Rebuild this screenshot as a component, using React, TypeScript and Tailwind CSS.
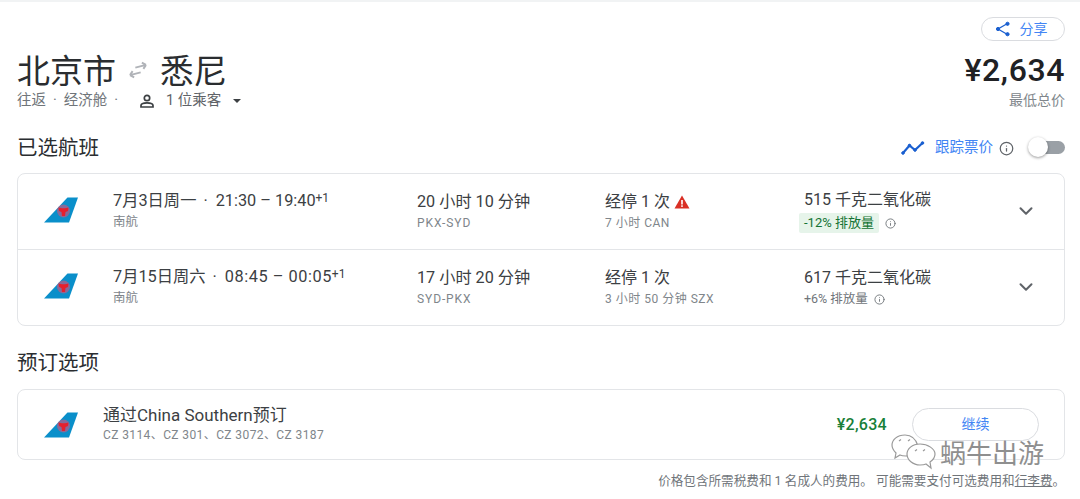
import { ChevronDown, Info } from "lucide-react";

const FONT = "font-['Roboto','Noto_Sans_CJK_SC',sans-serif]";

const FLIGHTS = [
  {
    date: "7月3日周一",
    times: "21:30 – 19:40",
    timesClass: "",
    duration: "20 小时 10 分钟",
    route: "PKX-SYD",
    stopInfo: "7 小时 CAN",
    warn: true,
    co2: "515 千克二氧化碳",
    emissions: "-12% 排放量",
    lower: true,
  },
  {
    date: "7月15日周六",
    times: "08:45 – 00:05",
    timesClass: "tracking-[0.55px]",
    duration: "17 小时 20 分钟",
    route: "SYD-PKX",
    stopInfo: "3 小时 50 分钟 SZX",
    warn: false,
    co2: "617 千克二氧化碳",
    emissions: "+6% 排放量",
    lower: false,
  },
];

function TailLogo() {
  return (
    <svg width="35" height="26" viewBox="0 0 35 26" className="shrink-0">
      <polygon points="0,25.5 23.5,0.5 34,0.5 25,25.5" fill="#0a8fca" />
      <circle cx="19.5" cy="14" r="6.5" fill="#c9567f" opacity="0.65" />
      <path
        d="M14.5 10.5 C16.5 11.5 22.5 11.5 24.5 10.5 L24 14 L21.5 15 L21 19 L18 19 L17.5 15 L15 14 Z"
        fill="#e5202e"
      />
    </svg>
  );
}

function FlightRow({ flight }: { flight: (typeof FLIGHTS)[number] }) {
  return (
    <div className="grid h-[75px] grid-cols-[95px_304px_188px_199px_200px_1fr] items-center">
      <div className="-mt-[3px] pl-[26px]">
        <TailLogo />
      </div>
      <div>
        <div className="flex h-5 items-center text-[16.3px] text-[#3c4043]">
          <span>{flight.date}</span>
          <span className="ml-[7px] mr-[8px]">·</span>
          <span className={flight.timesClass}>{flight.times}</span>
          <span className="-mt-[7px] text-[12px] leading-3">+1</span>
        </div>
        <div className="mt-[2px] text-[12.5px] text-[#80868b]">南航</div>
      </div>
      <div>
        <div className="text-[16.2px] leading-5 text-[#3c4043]">{flight.duration}</div>
        <div className="mt-[2px] text-[12px] tracking-[0.9px] text-[#80868b]">{flight.route}</div>
      </div>
      <div>
        <div className="flex items-center gap-[4px] text-[16px] leading-5 text-[#3c4043]">
          经停 1 次
          {flight.warn && (
            <svg width="16" height="14" viewBox="0 0 16 14">
              <path d="M8 0.5 L15.5 13.5 H0.5 Z" fill="#d93025" />
              <rect x="7.2" y="5" width="1.6" height="4.5" fill="#fff" />
              <rect x="7.2" y="10.3" width="1.6" height="1.6" fill="#fff" />
            </svg>
          )}
        </div>
        <div className="mt-[2px] text-[12px] tracking-[0.5px] text-[#80868b]">{flight.stopInfo}</div>
      </div>
      <div>
        <div className="text-[16px] leading-5 text-[#3c4043]">{flight.co2}</div>
        <div className="mt-[3px] flex items-center text-[12.5px]">
          {flight.lower ? (
            <span className="-ml-[5px] rounded-[2px] bg-[#e6f4ea] px-[5px] py-[2px] text-[13px] leading-[16px] text-[#137333]">
              {flight.emissions}
            </span>
          ) : (
            <span className="leading-[16px] text-[#70757a]">{flight.emissions}</span>
          )}
          <Info size={11} className="ml-[6px] text-[#70757a]" />
        </div>
      </div>
      <div className="-mt-[2px] flex justify-end pr-[27px]">
        <ChevronDown size={22} strokeWidth={2.2} className="text-[#5f6368]" />
      </div>
    </div>
  );
}

export default function App() {
  return (
    <div className={`${FONT} relative h-[499px] w-[1080px] overflow-hidden border-t-2 border-[#f1f3f4] bg-white`}>
      <div className="pl-[17px] pr-[15px]">
        {/* 标题 */}
        <div className="flex justify-end pt-[15px]">
          <button className="flex h-[24px] w-[84px] items-center justify-center gap-[9px] rounded-full border border-[#dadce0] text-[14px] text-[#4285f4]">
            <svg width="16" height="16" viewBox="0 0 16 16" fill="#1a5fd0" stroke="#1a5fd0" className="-ml-[4px]">
              <path d="M12.5 2.5 L3 8 L12.5 13.5" fill="none" strokeWidth="1.3" />
              <circle cx="12.5" cy="2.8" r="1.6" />
              <circle cx="3" cy="8" r="1.6" />
              <circle cx="12.5" cy="13.2" r="1.6" />
            </svg>
            分享
          </button>
        </div>
        <div className="flex items-start justify-between">
          <div className="pt-[7px]">
            <div className="flex h-[40px] items-center pt-[8px] text-[33px] text-[#2a2d30]">
              <span>北京市</span>
              <svg width="22" height="20" viewBox="0 0 22 20" className="mx-[11px] -mt-[4px]" fill="none" stroke="#b0b3b8" strokeWidth="1.9">
                <g transform="rotate(-14 11 10)">
                  <path d="M2 13 H13 M2 13 L5.5 9.8 M2 13 L5.5 16.2" />
                  <path d="M9 7 H20 M20 7 L16.5 3.8 M20 7 L16.5 10.2" />
                </g>
              </svg>
              <span className="text-[33.5px]">悉尼</span>
            </div>
            <div className="mt-[3px] flex h-5 items-center text-[14.5px] text-[#70757a]">
              <span>往返</span>
              <span className="mx-[7px]">·</span>
              <span>经济舱</span>
              <span className="ml-[7px]">·</span>
              <svg width="16" height="16" viewBox="0 0 16 16" fill="none" stroke="#3c4043" strokeWidth="1.7" className="ml-[21px]">
                <circle cx="8" cy="5" r="2.7" />
                <path d="M2 14 V12.6 C2 10.8 5 9.9 8 9.9 C11 9.9 14 10.8 14 12.6 V14 Z" />
              </svg>
              <span className="ml-[11px] text-[#5f6368]">1 位乘客</span>
              <span className="ml-[12px] h-0 w-0 border-x-[4px] border-t-[4px] border-x-transparent border-t-[#3c4043]" />
            </div>
          </div>
          <div className="flex flex-col items-end">
            <div className="mt-[9px] text-[32px] font-medium leading-[40px] tracking-[0.6px] text-[#202124]">¥2,634</div>
            <div className="text-[14px] leading-5 text-[#80868b]">最低总价</div>
          </div>
        </div>

        {/* 已选航班 */}
        <div className="mt-[22px] flex h-[30px] items-center justify-between">
          <div className="text-[20.5px] text-[#2a2d30]">已选航班</div>
          <div className="flex items-center">
            <svg width="24" height="14" viewBox="0 0 24 14" fill="#1a5fd0" stroke="#1a5fd0">
              <path d="M2 12 L8.5 4.5 L14 9 L21.5 2" fill="none" strokeWidth="2.2" />
              <circle cx="2" cy="12" r="1.3" />
              <circle cx="8.5" cy="4.5" r="1.3" />
              <circle cx="14" cy="9" r="1.3" />
              <circle cx="21.5" cy="2" r="1.3" />
            </svg>
            <span className="ml-[10px] text-[14.5px] text-[#4285f4]">跟踪票价</span>
            <Info size={15} className="ml-[6px] text-[#5f6368]" />
            <div className="relative ml-[15px] h-[13px] w-[36px] rounded-full bg-[#9aa0a6] -translate-y-[1px]">
              <div className="absolute -top-[4px] -left-[1px] h-[20px] w-[20px] rounded-full bg-white shadow-[0_1px_3px_rgba(0,0,0,0.4)]" />
            </div>
          </div>
        </div>
        <div className="mt-[10px] rounded-[8px] border border-[#e3e5e8]">
          <FlightRow flight={FLIGHTS[0]} />
          <div className="border-t border-[#e3e5e8]" />
          <FlightRow flight={FLIGHTS[1]} />
        </div>

        {/* 预订选项 */}
        <div className="mt-[22px] flex h-[30px] items-center text-[20.5px] text-[#2a2d30]">预订选项</div>
        <div className="mt-[11px] flex h-[71px] items-center rounded-[8px] border border-[#e3e5e8]">
          <div className="pl-[26px]">
            <TailLogo />
          </div>
          <div className="ml-[24px] flex-1">
            <div className="text-[17px] leading-5 text-[#3c4043]">通过China Southern预订</div>
            <div className="mt-px text-[12px] tracking-[0.4px] text-[#80868b]">CZ 3114、CZ 301、CZ 3072、CZ 3187</div>
          </div>
          <div className="text-[16px] font-medium tracking-[0.3px] text-[#188038]">¥2,634</div>
          <button className="mx-[25px] h-[33px] w-[127px] rounded-full border border-[#dadce0] text-[14px] text-[#4285f4]">
            继续
          </button>
        </div>
        <div className="mt-[13px] text-right text-[12.6px] leading-4 text-[#70757a]">
          价格包含所需税费和 1 名成人的费用。 可能需要支付可选费用和<span className="underline">行李费</span>。
        </div>
      </div>

      {/* 水印 */}
      <div className="absolute left-[891px] top-[436px] flex items-center text-[26px] leading-8 text-[#8f8f8f]">
        <svg width="46" height="36" viewBox="0 0 46 36" fill="#fff" stroke="#9a9a9a" strokeWidth="1.2" className="-mt-[4px]">
          <path d="M14 1 C6 1 1 6 1 11 C1 15 3 17 5 19 L4 24 L9 21 C11 22 13 22 15 22 C25 22 28 16 27 12 C25 5 20 1 14 1 Z" />
          <path d="M29 10 C21 10 16 15 16 20 C16 26 22 31 29 31 C31 31 33 31 35 30 L40 34 L39 28 C42 26 44 23 44 20 C44 15 37 10 29 10 Z" />
          <path d="M8 7 l2 -1.5 M17 7 l2 -1.5 M24 17 l2 -1.5 M32 17 l2 -1.5" fill="none" />
        </svg>
        <span className="ml-[3px] [text-shadow:0_0_2px_#fff]">蜗牛出游</span>
      </div>
    </div>
  );
}
